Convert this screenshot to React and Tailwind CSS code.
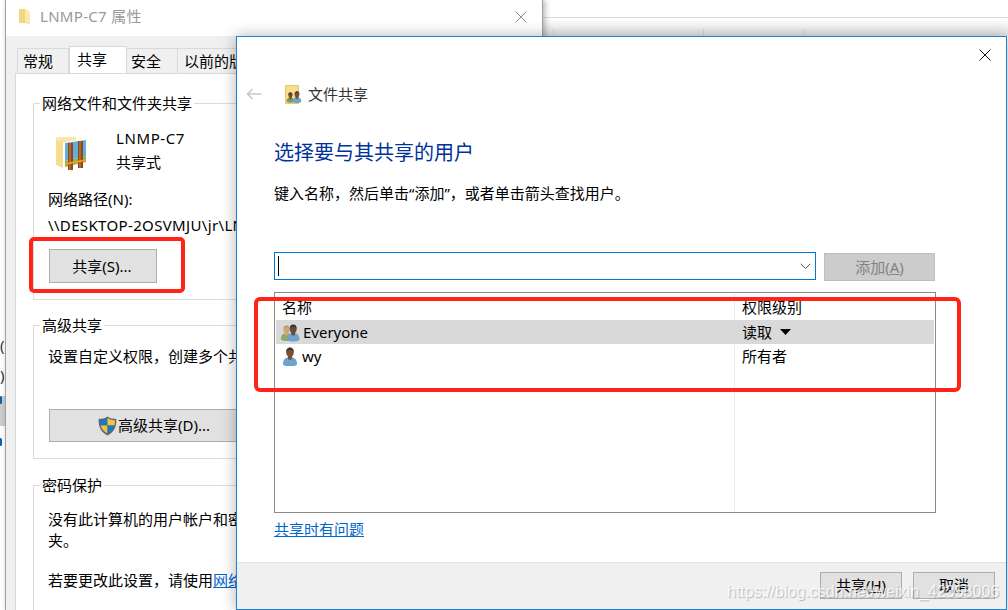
import React from "react";

const font = "font-['Noto_Sans','Noto_Sans_CJK_SC',sans-serif]";

function CloseX({ color, size = 12 }) {
  return (
    <svg width={size} height={size} viewBox="0 0 12 12" fill="none" stroke={color} strokeWidth="1">
      <path d="M0.5 0.5 L11.5 11.5 M11.5 0.5 L0.5 11.5" />
    </svg>
  );
}

function TinyFolder() {
  return (
    <svg width="13" height="17" viewBox="0 0 13 17">
      <path d="M1 1h6l5 3v12l-5-1H1z" fill="#f4d67e" />
      <path d="M7 1l5 3v12l-5-2z" fill="#fbe9ad" />
    </svg>
  );
}

function ArchiveFolder() {
  return (
    <svg width="34" height="38" viewBox="0 0 34 38">
      <path d="M1 2h12l4 3v32L1 30z" fill="#f8dd8f" />
      <path d="M1 2h20v4H1z" fill="#fbe7ae" />
      <path d="M8 7l24-3v29L8 37z" fill="#ffffff" />
      <path d="M10 8l21-3v16L10 26z" fill="#62aede" />
      <path d="M10 26l21-5v6L10 32z" fill="#8fb642" />
      <path d="M13 8h5v27h-5zM23 6h5v27h-5z" fill="#8b4a1d" />
      <path d="M14 8h2v27h-2zM24 6h2v27h-2z" fill="#b0682b" />
      <path d="M10 28l21-4v2l-21 4z" fill="#ef9a2d" />
    </svg>
  );
}

function Person({ x = 0, y = 0, skin = "#7a5036", hair = "#3d3630", body = "#6ea3cf", scale = 1 }) {
  return (
    <g transform={`translate(${x} ${y}) scale(${scale})`}>
      <path d="M1 17c0-5 3-7 7-7s7 2 7 7c0 1.500-3 2.500-7 2.500S1 18.500 1 17z" fill={body} />
      <path d="M6 8h4v4l-2 1-2-1z" fill={skin} />
      <ellipse cx="8" cy="5.500" rx="3.800" ry="4.700" fill={skin} />
      <path d="M4.200 5.500C4 2 6 .6 8 .6s4 1.400 3.800 4.900C11 3.600 9.500 3 8 3s-3 .6-3.800 2.500z" fill={hair} />
    </g>
  );
}

function SharedUsersIcon() {
  return (
    <svg width="17" height="19" viewBox="0 0 17 19">
      <rect x="0.500" y="0.500" width="13" height="18" fill="#f9dd8d" stroke="#e6c66e" />
      <Person x={1} y={7} scale={0.55} skin="#6e4a30" body="#7a9a5b" />
      <Person x={7} y={6} scale={0.62} />
    </svg>
  );
}

function GroupIcon() {
  return (
    <svg width="20" height="19" viewBox="0 0 20 19">
      <Person x={0} y={2} scale={0.82} skin="#d3a47a" hair="#a8a06a" body="#8cae63" />
      <Person x={6} y={1} scale={0.9} skin="#6d4a33" />
    </svg>
  );
}

function UserIcon() {
  return (
    <svg width="16" height="19" viewBox="0 0 16 19">
      <Person x={0} y={0} skin="#7a5036" />
    </svg>
  );
}

function Shield() {
  return (
    <svg width="19" height="20" viewBox="0 0 19 20">
      <path d="M9.500 0.500C12 2.300 15 3 18.300 3c.4 7.500-2 13-8.800 16.500C2.700 16 .3 10.500.7 3 4 3 7 2.300 9.500.500z" fill="#5b6470" />
      <path d="M9.500 2C7 3.500 4.500 4.300 2 4.300c0 2 .2 3.800.6 5.200h6.900z" fill="#1c79c9" />
      <path d="M9.500 2v7.500H16.400c.5-1.600.7-3.300.6-5.200-2.500 0-5-.8-7.500-2.300z" fill="#f7c33e" />
      <path d="M2.600 9.500c1 3.500 3.300 6 6.900 8V9.500z" fill="#f7c33e" />
      <path d="M9.500 9.500v8c3.600-2 5.900-4.500 6.900-8z" fill="#1c79c9" />
    </svg>
  );
}

function GroupBox({ title, className, children }) {
  return (
    <div className={`shrink-0 border border-[#dcdcdc] pl-[14px] ${className}`}>
      <div className="-ml-[8px] -mt-[11px] h-[21px] w-fit whitespace-nowrap bg-white px-[2px] text-[15px] leading-[21px]">{title}</div>
      {children}
    </div>
  );
}

function Line({ className = "", children }) {
  return <div className={`h-[20px] whitespace-nowrap text-[15px] leading-[20px] ${className}`}>{children}</div>;
}

function PropertiesWindow() {
  return (
    <div className="absolute left-[5px] top-0 flex h-[610px] w-[538px] flex-col overflow-hidden border-x border-[#a0a0a0] bg-[#f0f0f0] shadow-[2px_0_6px_rgba(0,0,0,0.3)]">
      <div className="flex h-[36px] shrink-0 items-center justify-between bg-white pb-[3px] pl-[12px] pr-[15px]">
        <div className="flex items-center gap-[9px]">
          <TinyFolder />
          <span className="text-[15px] tracking-[0.3px] text-[#999999]">LNMP-C7 属性</span>
        </div>
        <CloseX color="#8f8f8f" />
      </div>

      <div className="flex h-[37px] shrink-0 items-end pl-[11px] text-[15px]">
        <div className="flex h-[25px] w-[52px] items-center border border-b-0 border-[#d9d9d9] bg-[#f0f0f0] pl-[5px]">常规</div>
        <div className="flex h-[27px] w-[58px] items-center border border-b-0 border-[#d9d9d9] bg-white pb-[2px] pl-[7px]">共享</div>
        <div className="flex h-[25px] w-[51px] items-center border border-b-0 border-l-0 border-[#d9d9d9] bg-[#f0f0f0] pl-[4px]">安全</div>
        <div className="flex h-[25px] w-[100px] items-center border border-b-0 border-l-0 border-[#d9d9d9] bg-[#f0f0f0] pl-[6px]">以前的版本</div>
      </div>

      <div className="ml-[9px] mr-[10px] flex min-h-0 flex-1 flex-col overflow-hidden border-l border-t border-[#d9d9d9] bg-white pl-[17px] pr-[14px] pt-[29px] text-black">
        <GroupBox title="网络文件和文件夹共享" className="h-[197px]">
          <div className="mt-[14px] flex">
            <div className="ml-[7px] mt-[7px] w-[61px]"><ArchiveFolder /></div>
            <div>
              <Line className="tracking-[0.6px]">LNMP-C7</Line>
              <Line className="mt-[4px]">共享式</Line>
            </div>
          </div>
          <Line className="mt-[16px]">网络路径(N):</Line>
          <Line className="mt-[6px] tracking-[0.35px]">\\DESKTOP-2OSVMJU\jr\LNMP-C7</Line>
          <button className="ml-px mt-[14px] flex h-[34px] w-[108px] items-center justify-center border border-[#adadad] bg-[#e1e1e1] pr-[2px] text-[15px]">共享(S)...</button>
        </GroupBox>

        <GroupBox title="高级共享" className="mt-[25px] h-[134px]">
          <Line className="mt-[10px]">设置自定义权限，创建多个共享，并设置其他高级共享选项。</Line>
          <button className="ml-px mt-[43px] flex h-[33px] w-[212px] items-center justify-center gap-[1px] border border-[#adadad] bg-[#e1e1e1] pr-[2px] text-[15px]">
            <Shield />
            高级共享(D)...
          </button>
        </GroupBox>

        <GroupBox title="密码保护" className="mt-[26px] h-[200px]">
          <Line className="mt-[13px]">没有此计算机的用户帐户和密码的用户可以访问与所有人共享的文件</Line>
          <Line className="mt-px">夹。</Line>
          <Line className="mt-[20px]">
            若要更改此设置，请使用<span className="text-[#0066cc] underline">网络和共享中心</span>。
          </Line>
        </GroupBox>
      </div>
    </div>
  );
}

function ShareDialog() {
  return (
    <div className="absolute left-[236px] top-[36px] flex h-[574px] w-[771px] flex-col border border-[#1883d7] bg-white text-black shadow-[0_0_14px_rgba(0,0,0,0.3)]">
      <div className="flex h-[37px] shrink-0 items-start justify-end pr-[15px] pt-[12px]"><CloseX color="#111111" /></div>

      <div className="flex h-[40px] shrink-0 items-center pl-[9px]">
        <svg width="16" height="12" viewBox="0 0 16 12" fill="none" stroke="#c8c8c8" strokeWidth="1.600">
          <path d="M15.500 6H1.500M6.500 1 1.500 6l5 5" />
        </svg>
        <span className="ml-[23px]"><SharedUsersIcon /></span>
        <span className="ml-[6px] text-[15px] text-[#333333]">文件共享</span>
      </div>

      <div className="min-h-0 flex-1 pl-[37px] pr-[70px]">
        <div className="mt-[25px] h-[28px] whitespace-nowrap text-[20px] leading-[28px] text-[#003399]">选择要与其共享的用户</div>
        <Line className="mt-[16px]">键入名称，然后单击“添加”，或者单击箭头查找用户。</Line>

        <div className="mt-[49px] flex items-start gap-[8px]">
          <div className="flex h-[28px] w-[542px] items-center justify-between border border-[#0078d7] pl-[3px] pr-[4px]">
            <div className="h-[20px] w-px bg-black" />
            <svg width="11" height="7" viewBox="0 0 11 7" fill="none" stroke="#555555"><path d="M.8.8 5.500 5.500 10.200.8" /></svg>
          </div>
          <button className="mt-px flex h-[28px] w-[111px] items-center justify-center border border-[#bfbfbf] bg-[#cccccc] text-[15px] text-[#838383]">
            <span>添加(<span className="underline">A</span>)</span>
          </button>
        </div>

        <div className="mt-[11px] h-[221px] w-[662px] border border-[#8a8a8a] p-px text-[15px]">
          <div className="grid h-full grid-cols-[459px_1fr] grid-rows-[26px_24px_24px_1fr]">
            <div className="border-r border-[#e5ecf5] pl-[6px] leading-[26px]">名称</div>
            <div className="pl-[7px] leading-[26px]">权限级别</div>

            <div className="flex items-center gap-[3px] border-r border-[#d9d9d9] bg-[#d9d9d9] pl-[4px]"><GroupIcon />Everyone</div>
            <div className="flex items-center bg-[#d9d9d9] pl-[7px]">
              读取
              <svg className="ml-[8px]" width="11" height="6" viewBox="0 0 11 6"><path d="M0 0h11L5.500 6z" fill="#000000" /></svg>
            </div>

            <div className="flex items-center gap-[4px] border-r border-[#e5ecf5] pl-[6px]"><UserIcon />wy</div>
            <div className="flex items-center pl-[7px]">所有者</div>

            <div className="border-r border-[#e5ecf5]" />
            <div />
          </div>
        </div>

        <div className="mt-[6px] h-[20px] whitespace-nowrap text-[15px] leading-[20px] text-[#0066cc] underline">共享时有问题</div>
      </div>

      <div className="flex h-[47px] shrink-0 justify-end gap-[11px] border-t border-[#dfdfdf] bg-[#f0f0f0] pr-[11px] pt-[9px] text-[15px]">
        <button className="flex h-[27px] w-[82px] items-center justify-center border border-[#adadad] bg-[#e1e1e1]">
          <span>共享(<span className="underline">H</span>)</span>
        </button>
        <button className="flex h-[27px] w-[82px] items-center justify-center border border-[#adadad] bg-[#e1e1e1]">取消</button>
      </div>
    </div>
  );
}

export default function App() {
  return (
    <div className={`relative h-[610px] w-[1008px] overflow-hidden bg-white ${font}`}>
      {/* explorer window behind, top right */}
      <div className="absolute left-[543px] top-0 h-[36px] w-[465px]">
        <div className="h-[18px] border-b border-[#d9d9d9]" />
        <div className="flex h-[18px] items-end bg-gradient-to-b from-white to-[#e6e6e6] pl-[10px]">
          <div className="h-[7px] w-[150px] border-l border-[#d9d9d9]" />
          <div className="h-[7px] w-[100px] border-l border-[#d9d9d9]" />
          <div className="h-[7px] w-[100px] border-l border-[#d9d9d9]" />
        </div>
      </div>

      {/* explorer window behind, left edge */}
      <div className="absolute left-0 top-[335px] w-[5px] overflow-hidden text-[15px] text-[#333333]">
        <div className="h-[21px] leading-[21px]">(</div>
        <div className="mt-[9px] h-[21px] leading-[21px]">)</div>
        <div className="mt-[2px] h-[30px] bg-[#cccccc]">
          <div className="ml-[-1px] mt-[10px] h-[8px] w-[3px] rounded-full bg-[#0a64b4]" />
        </div>
        <div className="ml-[-1px] mt-[12px] h-[8px] w-[3px] rounded-full bg-[#0a64b4]" />
      </div>

      <PropertiesWindow />
      <ShareDialog />

      {/* red annotations */}
      <div className="absolute left-[29px] top-[237px] h-[56px] w-[156px] rounded-[5px] border-[4px] border-[#ff2318]" />
      <div className="absolute left-[254px] top-[297px] h-[95px] w-[707px] rounded-[6px] border-[4px] border-[#ff2318]" />

      {/* watermark */}
      <div className="absolute left-[727px] top-[582px] whitespace-nowrap font-['Liberation_Sans',sans-serif] text-[16px] leading-[20px] text-white/80 [text-shadow:1px_1px_1px_rgba(110,110,110,0.45)]">
        https://blog.csdn.net/weixin_42358006
      </div>
    </div>
  );
}
